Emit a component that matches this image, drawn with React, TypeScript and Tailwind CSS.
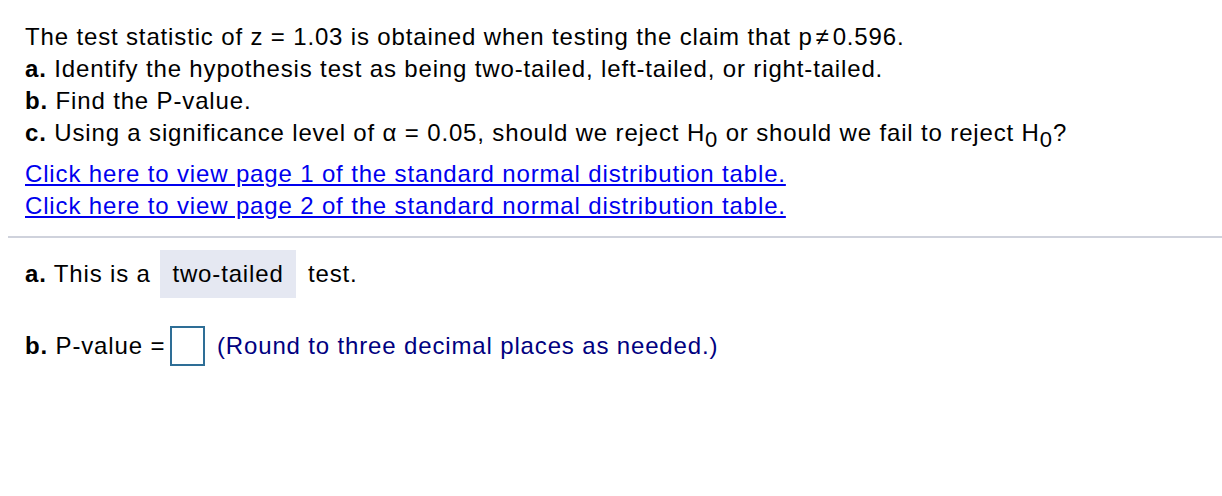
import React from "react";

export default function App() {
  const sub = "relative top-[6px] text-[22px]";
  return (
    <div
      className="w-[1222px] h-[496px] bg-white text-black tracking-[0.85px]"
      style={{ fontFamily: '"Liberation Sans", Arial, sans-serif' }}
    >
      <div className="pl-[25px] pt-[21px] text-[24px] leading-[32px]">
        <div>
          The test statistic of z = 1.03 is obtained when testing the claim that p<span className="mx-[3px]">≠</span>0.596.
        </div>
        <div>
          <b>a.</b> Identify the hypothesis test as being two-tailed, left-tailed, or right-tailed.
        </div>
        <div>
          <b>b.</b> Find the P-value.
        </div>
        <div className="h-[32px]">
          <b>c.</b> Using a significance level of α = 0.05, should we reject H<span className={sub}>0</span> or should we fail to reject H
          <span className={sub}>0</span>?
        </div>
        <div className="mt-[9px] text-[#0000ee] underline">
          <div>Click here to view page 1 of the standard normal distribution table.</div>
          <div>Click here to view page 2 of the standard normal distribution table.</div>
        </div>
      </div>
      <div className="ml-[8px] mt-[14px] h-[2px] bg-[#cfd2dc]" />
      <div className="pl-[25px] pt-[12px] text-[24px]">
        <div className="flex items-center h-[48px]">
          <span className="w-[135px]">
            <b>a.</b> This is a
          </span>
          <span className="bg-[#e5e8f2] h-[48px] w-[136px] flex items-center justify-center">two-tailed</span>
          <span className="ml-[12px]">test.</span>
        </div>
        <div className="flex items-center mt-[28px] h-[40px]">
          <span className="w-[145px] whitespace-nowrap">
            <b>b.</b> P-value =
          </span>
          <span className="w-[35px] h-[40px] border-2 border-[#2e6e96]" />
          <span className="ml-[12px] text-[#000080]">(Round to three decimal places as needed.)</span>
        </div>
      </div>
    </div>
  );
}
